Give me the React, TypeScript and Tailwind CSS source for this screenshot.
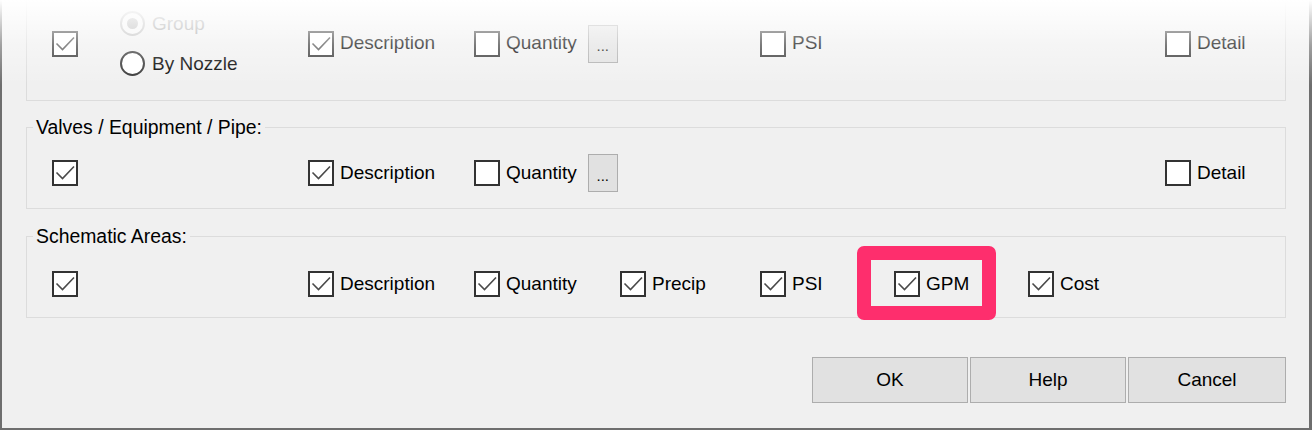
import React from "react";

const font = { fontFamily: '"Liberation Sans", Arial, sans-serif' };

function Check({ checked }: { checked?: boolean }) {
  return (
    <span className="flex h-[26px] w-[26px] shrink-0 items-center justify-center border-2 border-[#333] bg-white">
      {checked && (
        <svg width="22" height="22" viewBox="0 0 22 22" fill="none">
          <polyline points="2.5,10.5 8.5,16.5 20,4.5" stroke="#4a4a4a" strokeWidth="1.6" />
        </svg>
      )}
    </span>
  );
}

function Item({ label, checked, w }: { label?: string; checked?: boolean; w?: string }) {
  return (
    <div className={`flex shrink-0 items-center gap-[6px] ${w ?? ""}`}>
      <Check checked={checked} />
      {label && <span>{label}</span>}
    </div>
  );
}

function Dots() {
  return (
    <span className="ml-[11px] flex h-[38px] w-[30px] items-center justify-center border border-[#adadad] bg-[#e1e1e1] pt-[6px] text-[15px]">
      ...
    </span>
  );
}

function Radio({ label, on, disabled }: { label: string; on?: boolean; disabled?: boolean }) {
  return (
    <div className="flex h-[25px] items-center gap-[7px] leading-[25px]">
      <span
        className={`flex h-[25px] w-[25px] items-center justify-center rounded-full border-2 ${
          disabled ? "border-[#bcbcbc] bg-[#f4f4f4]" : "border-[#333] bg-white"
        }`}
      >
        {on && <span className="h-[11px] w-[11px] rounded-full bg-[#b4b4b4]" />}
      </span>
      <span className={disabled ? "text-[#a0a0a0]" : "text-black"}>{label}</span>
    </div>
  );
}

function Titled({ title, pt, children }: { title: string; pt: string; children: React.ReactNode }) {
  return (
    <div>
      <div className="relative z-10 ml-[7px] w-fit bg-[#f0f0f0] px-[3px] text-[19.4px] leading-[22px]">{title}</div>
      <div className={`-mt-[11px] h-[82px] border border-[#dcdcdc] pl-[25px] ${pt}`}>{children}</div>
    </div>
  );
}

export default function App() {
  return (
    <div className="relative h-[430px] w-[1312px] overflow-hidden text-[19px] text-black" style={font}>
      <div className="h-full border-b-2 border-l-2 border-r-[3px] border-[#6e6e6e] bg-[#f0f0f0] pl-[24px] pr-[23px]">
        <div className="h-[101px] border-x border-b border-[#dcdcdc] pl-[25px] pt-[11px]">
          <div className="flex items-center">
            <Item checked w="w-[68px]" />
            <div className="flex w-[188px] shrink-0 flex-col gap-[15px]">
              <Radio label="Group" on disabled />
              <Radio label="By Nozzle" />
            </div>
            <Item label="Description" checked w="w-[166px]" />
            <div className="flex w-[286px] shrink-0 items-center">
              <Item label="Quantity" />
              <Dots />
            </div>
            <Item label="PSI" w="w-[405px]" />
            <Item label="Detail" />
          </div>
        </div>

        <div className="mt-[15px]">
          <Titled title="Valves / Equipment / Pipe:" pt="pt-[26px]">
            <div className="flex items-center">
              <Item checked w="w-[256px]" />
              <Item label="Description" checked w="w-[166px]" />
              <div className="flex w-[691px] shrink-0 items-center">
                <Item label="Quantity" />
                <Dots />
              </div>
              <Item label="Detail" />
            </div>
          </Titled>
        </div>

        <div className="mt-[16px]">
          <Titled title="Schematic Areas:" pt="pt-[33px]">
            <div className="flex items-center">
              <Item checked w="w-[256px]" />
              <Item label="Description" checked w="w-[166px]" />
              <Item label="Quantity" checked w="w-[146px]" />
              <Item label="Precip" checked w="w-[140px]" />
              <Item label="PSI" checked w="w-[134px]" />
              <Item label="GPM" checked w="w-[134px]" />
              <Item label="Cost" checked />
            </div>
          </Titled>
        </div>

        <div className="mt-[39px] flex justify-end gap-[2px]">
          <button className="h-[46px] w-[156px] border border-[#adadad] bg-[#e1e1e1]">OK</button>
          <button className="h-[46px] w-[156px] border border-[#adadad] bg-[#e1e1e1]">Help</button>
          <button className="h-[46px] w-[158px] border border-[#adadad] bg-[#e1e1e1]">Cancel</button>
        </div>
      </div>

      <div className="pointer-events-none absolute inset-x-0 top-0 h-[100px] bg-linear-to-b from-white via-[rgba(255,255,255,0.35)] via-45% to-transparent to-85%" />
      <div className="pointer-events-none absolute left-[857px] top-[246px] h-[74px] w-[139px] rounded-[7px] border-[14px] border-[#fe2e6d]" />
    </div>
  );
}
